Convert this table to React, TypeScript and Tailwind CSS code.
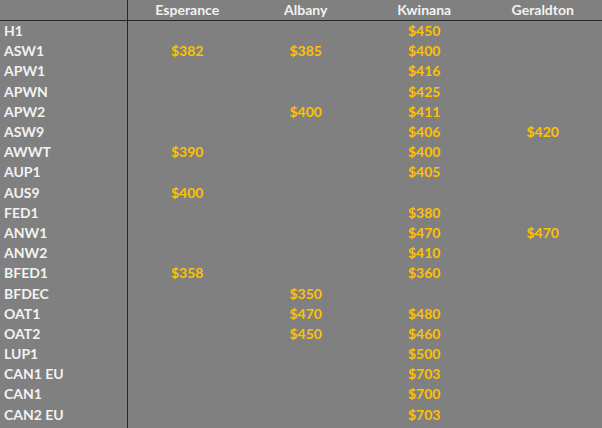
const columns = ['Esperance', 'Albany', 'Kwinana', 'Geraldton'];

const rows: [string, (string | null)[]][] = [
  ['H1', [null, null, '$450', null]],
  ['ASW1', ['$382', '$385', '$400', null]],
  ['APW1', [null, null, '$416', null]],
  ['APWN', [null, null, '$425', null]],
  ['APW2', [null, '$400', '$411', null]],
  ['ASW9', [null, null, '$406', '$420']],
  ['AWWT', ['$390', null, '$400', null]],
  ['AUP1', [null, null, '$405', null]],
  ['AUS9', ['$400', null, null, null]],
  ['FED1', [null, null, '$380', null]],
  ['ANW1', [null, null, '$470', '$470']],
  ['ANW2', [null, null, '$410', null]],
  ['BFED1', ['$358', null, '$360', null]],
  ['BFDEC', [null, '$350', null, null]],
  ['OAT1', [null, '$470', '$480', null]],
  ['OAT2', [null, '$450', '$460', null]],
  ['LUP1', [null, null, '$500', null]],
  ['CAN1 EU', [null, null, '$703', null]],
  ['CAN1', [null, null, '$700', null]],
  ['CAN2 EU', [null, null, '$703', null]],
];

export default function App() {
  return (
    <div
      className="w-[602px] h-[428px] overflow-hidden bg-[#808080] font-bold text-[14px] leading-none flex flex-col"
      style={{fontFamily: 'Lato, "Open Sans", sans-serif'}}
    >
      <div className="grid grid-cols-[128px_1fr_1fr_1fr_1fr] h-[21px] shrink-0 border-b border-[#262626]">
        <div className="border-r border-[#262626]"/>
        {columns.map(c => (
          <div key={c} className="flex items-center justify-center text-[#f2f2f2] pb-[1px]">{c}</div>
        ))}
      </div>
      {rows.map(([label, vals]) => (
        <div key={label} className="grid grid-cols-[128px_1fr_1fr_1fr_1fr] h-[20.2px] shrink-0">
          <div className="flex items-center pl-[4px] text-[#f2f2f2] border-r border-[#262626]">{label}</div>
          {vals.map((v, i) => (
            <div key={i} className="flex items-center justify-center text-[#ffc000]">{v}</div>
          ))}
        </div>
      ))}
      <div className="flex-1 w-[128px] border-r border-[#262626]"/>
    </div>
  );
}
